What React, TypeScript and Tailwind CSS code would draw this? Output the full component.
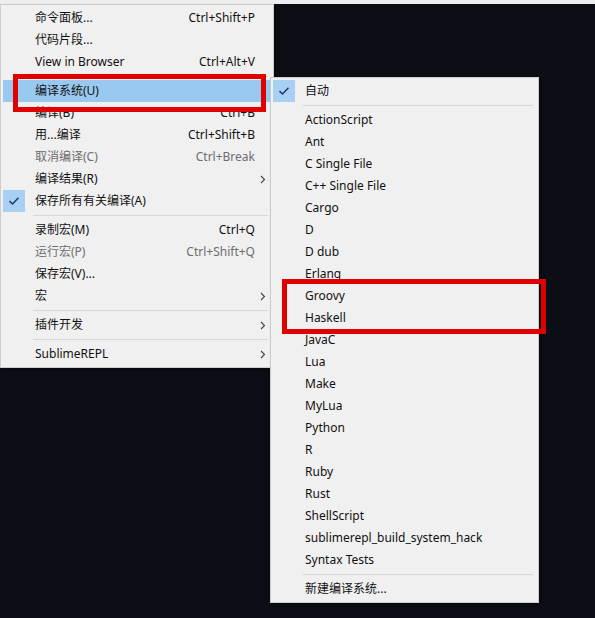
import React from "react"

type Item =
  | { sep: true }
  | {
      sep?: false
      label: string
      shortcut?: string
      sub?: boolean
      checked?: boolean
      disabled?: boolean
      active?: boolean
    }

const mainMenu: Item[] = [
  { label: "命令面板...", shortcut: "Ctrl+Shift+P" },
  { label: "代码片段..." },
  { label: "View in Browser", shortcut: "Ctrl+Alt+V" },
  { sep: true },
  { label: "编译系统(U)", active: true },
  { label: "编译(B)", shortcut: "Ctrl+B" },
  { label: "用...编译", shortcut: "Ctrl+Shift+B" },
  { label: "取消编译(C)", shortcut: "Ctrl+Break", disabled: true },
  { label: "编译结果(R)", sub: true },
  { label: "保存所有有关编译(A)", checked: true },
  { sep: true },
  { label: "录制宏(M)", shortcut: "Ctrl+Q" },
  { label: "运行宏(P)", shortcut: "Ctrl+Shift+Q", disabled: true },
  { label: "保存宏(V)..." },
  { label: "宏", sub: true },
  { sep: true },
  { label: "插件开发", sub: true },
  { sep: true },
  { label: "SublimeREPL", sub: true },
]

const buildSystems = [
  "ActionScript",
  "Ant",
  "C Single File",
  "C++ Single File",
  "Cargo",
  "D",
  "D dub",
  "Erlang",
  "Groovy",
  "Haskell",
  "JavaC",
  "Lua",
  "Make",
  "MyLua",
  "Python",
  "R",
  "Ruby",
  "Rust",
  "ShellScript",
  "sublimerepl_build_system_hack",
  "Syntax Tests",
]

const subMenu: Item[] = [
  { label: "自动", checked: true },
  { sep: true },
  ...buildSystems.map((label) => ({ label })),
  { sep: true },
  { label: "新建编译系统..." },
]

function Check() {
  return (
    <svg width="12" height="10" viewBox="0 0 12 10" fill="none">
      <path d="M1.5 5.2 L4.5 8 L10.5 1.8" stroke="#1c3d6e" strokeWidth="1.6" />
    </svg>
  )
}

function Arrow() {
  return (
    <svg width="6" height="9" viewBox="0 0 6 9" fill="none">
      <path d="M1 1 L4.5 4.5 L1 8" stroke="#444" strokeWidth="1.1" />
    </svg>
  )
}

function Menu({ items, arrows }: { items: Item[]; arrows: boolean }) {
  return (
    <div className="flex flex-col border border-[#cccccc] bg-[#f0f0f0] p-[2px] shadow-[2px_2px_3px_rgba(0,0,0,0.35)]">
      {items.map((item, i) =>
        item.sep ? (
          <div key={i} className="flex h-[7px] items-center pl-[30px] pr-[3px]">
            <div className="h-px w-full bg-[#d7d7d7]" />
          </div>
        ) : (
          <div
            key={i}
            className={`flex h-[22px] items-center ${item.active ? "bg-[#99c9ef]" : ""} ${
              item.disabled ? "text-[#6d6d6d]" : "text-[#111111]"
            }`}
          >
            <div className="flex w-[32px] shrink-0 items-center">
              {item.checked && (
                <div className="flex h-[22px] w-[22px] items-center justify-center bg-[#a7d0f2]">
                  <Check />
                </div>
              )}
            </div>
            <span className="flex-1 whitespace-nowrap">{item.label}</span>
            {item.shortcut && <span className="whitespace-nowrap">{item.shortcut}</span>}
            {arrows && (
              <div className="flex w-[16px] shrink-0 items-center justify-center">
                {item.sub && <Arrow />}
              </div>
            )}
          </div>
        )
      )}
    </div>
  )
}

export default function App() {
  return (
    <div
      className="relative h-[618px] w-[595px] overflow-hidden bg-[#0b0e15] text-[12px]"
      style={{ fontFamily: '"Noto Sans", "Noto Sans CJK SC", sans-serif' }}
    >
      <div className="h-[4px] bg-[#eceeef]" />

      <div className="absolute left-0 top-[4px] w-[274px]">
        <Menu items={mainMenu} arrows />
      </div>

      <div className="absolute left-[270px] top-[77px] w-[269px]">
        <Menu items={subMenu} arrows={false} />
      </div>

      {/* annotation boxes */}
      <div className="absolute left-[13px] top-[74px] h-[38px] w-[253px] border-[5px] border-[#e00000]" />
      <div className="absolute left-[282px] top-[279px] h-[55px] w-[264px] border-[5px] border-[#e00000]" />
    </div>
  )
}
